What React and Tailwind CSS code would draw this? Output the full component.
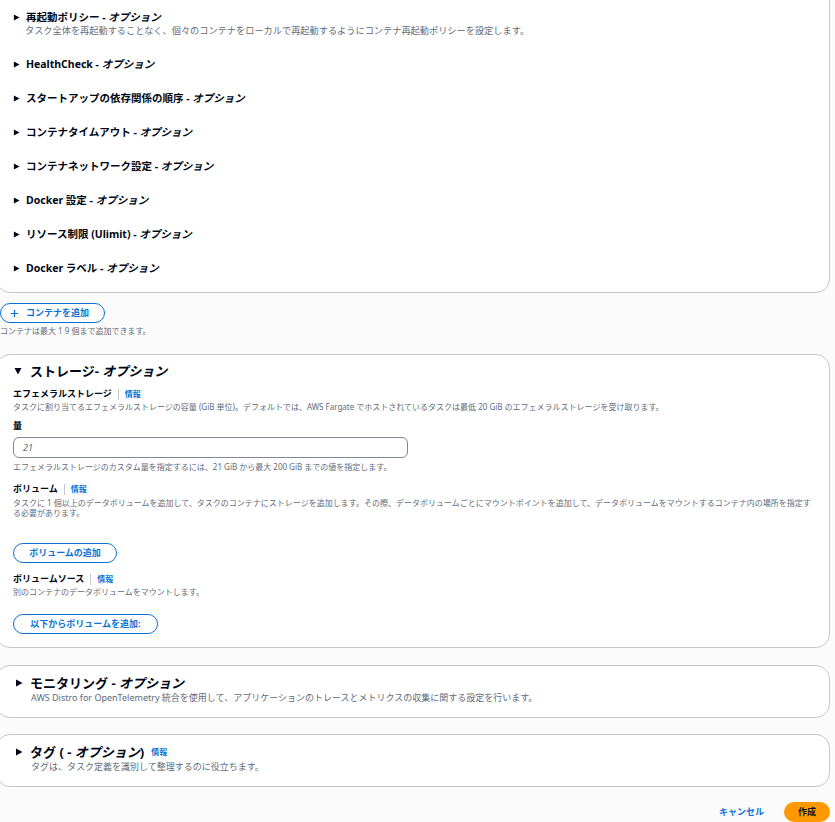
import { Plus } from "lucide-react";

const font = { fontFamily: '"Noto Sans", "Noto Sans CJK JP", sans-serif' };

// Collapsed sections inside the container card
const containerOptions = [
  {
    title: "再起動ポリシー",
    desc: "タスク全体を再起動することなく、個々のコンテナをローカルで再起動するようにコンテナ再起動ポリシーを設定します。",
  },
  { title: "HealthCheck" },
  { title: "スタートアップの依存関係の順序" },
  { title: "コンテナタイムアウト" },
  { title: "コンテナネットワーク設定" },
  { title: "Docker 設定" },
  { title: "リソース制限 (Ulimit)" },
  { title: "Docker ラベル" },
];

const Caret = ({ open = false, className = "" }) => (
  <svg
    viewBox="0 0 8 8"
    className={`shrink-0 fill-[#000716] ${className}`}
    style={{ transform: open ? "rotate(90deg)" : undefined }}
  >
    <polygon points="1,0.5 7.5,4 1,7.5" />
  </svg>
);

const Info = () => (
  <>
    <span className="mx-[6px] inline-block h-[11px] w-px bg-[#c6c6cd] align-middle" />
    <span className="font-bold text-[8px] text-[#0972d3]">情報</span>
  </>
);

const PillButton = ({ children, className = "" }) => (
  <button
    className={`flex h-[20px] items-center whitespace-nowrap rounded-full border-[1.5px] border-[#0972d3] bg-white px-[14px] text-[9px] font-bold text-[#0972d3] ${className}`}
  >
    {children}
  </button>
);

const Field = ({ label, info = false, children }) => (
  <div className="flex flex-col">
    <div className="flex h-[12px] items-center text-[9px] font-bold leading-[12px] text-[#000716]">
      {label}
      {info && <Info />}
    </div>
    {children}
  </div>
);

const Hint = ({ children, className = "" }) => (
  <p className={`text-[8px] leading-[10px] text-[#5f6b7a] ${className}`}>{children}</p>
);

export default function App() {
  return (
    <div
      className="min-h-[822px] w-[835px] overflow-hidden bg-[#fbfbfb] text-[#000716]"
      style={font}
    >
      <div className="flex flex-col pr-[5px]">
        {/* Container card, scrolled so its top edge is above the viewport */}
        <section className="-ml-[4px] -mt-[20px] rounded-[14px] border border-[#c6c6cd] bg-white pb-[17px] pl-[16px] pt-[29px]">
          <div className="flex flex-col gap-[20px]">
            {containerOptions.map((opt) => (
              <div key={opt.title} className="flex flex-col">
                <div className="flex h-[14px] items-center gap-[6px] text-[10.5px] font-bold leading-[14px]">
                  <Caret className="h-[7px] w-[7px]" />
                  <span>
                    {opt.title} - <i>オプション</i>
                  </span>
                </div>
                {opt.desc && (
                  <p className="pl-[12px] text-[9.2px] leading-[13px] text-[#5f6b7a]">{opt.desc}</p>
                )}
              </div>
            ))}
          </div>
        </section>

        <div className="mt-[10px] flex flex-col items-start">
          <PillButton className="w-[105px] justify-start gap-[6px] pl-[8px] pr-[12px]">
            <Plus className="h-[11px] w-[11px] shrink-0" strokeWidth={2.6} />
            コンテナを追加
          </PillButton>
          <Hint className="mt-[3px]">コンテナは最大 1 9 個まで追加できます。</Hint>
        </div>

        {/* Storage */}
        <section className="-ml-[4px] mt-[18px] rounded-[14px] border border-[#c6c6cd] bg-white pb-[13px] pl-[16px] pr-[16px] pt-[7px]">
          <div className="flex h-[18px] items-center gap-[8px] pl-[1px] text-[13px] font-bold leading-[18px]">
            <Caret open className="h-[8px] w-[8px]" />
            <span>
              ストレージ- <i>オプション</i>
            </span>
          </div>

          <div className="mt-[8px] flex flex-col items-start">
            <Field label="エフェメラルストレージ" info>
              <Hint className="mt-[2px]">
                タスクに割り当てるエフェメラルストレージの容量 (GiB 単位)。デフォルトでは、AWS Fargate でホストされているタスクは最低 20 GiB のエフェメラルストレージを受け取ります。
              </Hint>
            </Field>

            <div className="mt-[8px]">
              <Field label="量">
                <div className="mt-[5px] flex h-[21px] w-[395px] items-center rounded-[6px] border border-[#7d8998] bg-white px-[9px] text-[9px] italic text-[#5f6b7a]">
                  21
                </div>
                <Hint className="mt-[4px]">
                  エフェメラルストレージのカスタム量を指定するには、21 GiB から最大 200 GiB までの値を指定します。
                </Hint>
              </Field>
            </div>

            <div className="mt-[11px]">
              <Field label="ボリューム" info>
                <Hint className="mt-[3px]">
                  タスクに 1 個以上のデータボリュームを追加して、タスクのコンテナにストレージを追加します。その際、データボリュームごとにマウントポイントを追加して、データボリュームをマウントするコンテナ内の場所を指定する必要があります。
                </Hint>
              </Field>
            </div>

            <PillButton className="mt-[25px] w-[104px] justify-center">ボリュームの追加</PillButton>

            <div className="mt-[10px]">
              <Field label="ボリュームソース" info>
                <Hint className="mt-[2px]">別のコンテナのデータボリュームをマウントします。</Hint>
              </Field>
            </div>

            <PillButton className="mt-[17px] w-[145px] justify-center">以下からボリュームを追加:</PillButton>
          </div>
        </section>

        {/* Monitoring */}
        <section className="-ml-[4px] mt-[17px] rounded-[14px] border border-[#c6c6cd] bg-white pb-[13px] pl-[18px] pt-[8px]">
          <div className="flex h-[18px] items-center gap-[7px] text-[13px] font-bold leading-[18px]">
            <Caret className="h-[8px] w-[8px]" />
            <span>
              モニタリング - <i>オプション</i>
            </span>
          </div>
          <p className="pl-[16px] text-[9px] leading-[12px] text-[#5f6b7a]">
            AWS Distro for OpenTelemetry 統合を使用して、アプリケーションのトレースとメトリクスの収集に関する設定を行います。
          </p>
        </section>

        {/* Tags */}
        <section className="-ml-[4px] mt-[16px] rounded-[14px] border border-[#c6c6cd] bg-white pb-[13px] pl-[18px] pt-[8px]">
          <div className="flex h-[18px] items-center gap-[7px] text-[13px] font-bold leading-[18px]">
            <Caret className="h-[8px] w-[8px]" />
            <span>
              タグ ( - <i>オプション</i>)
            </span>
            <span className="text-[8px] font-bold text-[#0972d3]">情報</span>
          </div>
          <p className="pl-[16px] text-[9px] leading-[12px] text-[#5f6b7a]">
            タグは、タスク定義を識別して整理するのに役立ちます。
          </p>
        </section>

        {/* Footer actions */}
        <div className="mt-[15px] flex items-center justify-end gap-[20px]">
          <button className="text-[9px] font-bold text-[#0972d3]">キャンセル</button>
          <button className="flex h-[20px] w-[46px] items-center justify-center rounded-full bg-[#ff9900] text-[9px] font-bold text-[#0f141a]">
            作成
          </button>
        </div>
      </div>
    </div>
  );
}
